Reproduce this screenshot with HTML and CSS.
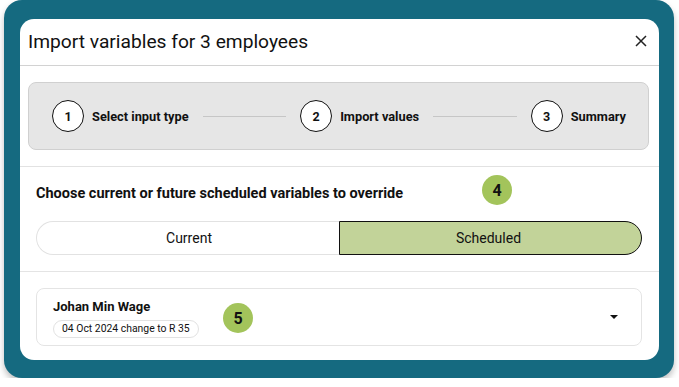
FILE: index.html
```html
<!DOCTYPE html>
<html lang='en'>
<head>
  <meta charset='UTF-8'>
  <meta name='viewport' content='width=device-width,initial-scale=1.0'>
  <title>Import variables</title>
  <link rel="stylesheet" href="styles.css">
</head>
<body>
  <div class='frame'>
    <div class='dialog'>
      <!-- HEADER -->
      <div class='header'>
        <h1>Import variables for 3 employees</h1>
        <button class='close' aria-label='Close'>
          <svg width='12' height='12' viewBox='0 0 12 12'><path d='M1 1L11 11M11 1L1 11' stroke='#222' stroke-width='1.5'/></svg>
        </button>
      </div>

      <!-- STEPPER -->
      <div class='section steps-wrap'>
        <div class='steps'>
          <div class='step'><span class='num'>1</span><span class='label'>Select input type</span></div>
          <span class='rule'></span>
          <div class='step'><span class='num'>2</span><span class='label'>Import values</span></div>
          <span class='rule'></span>
          <div class='step'><span class='num'>3</span><span class='label'>Summary</span></div>
        </div>
      </div>

      <!-- CHOICE -->
      <div class='section choice'>
        <p class='question'>Choose current or future scheduled variables to override</p>
        <span class='badge badge-4'>4</span>
        <div class='toggle'>
          <button class='opt'>Current</button>
          <button class='opt active'>Scheduled</button>
        </div>
      </div>

      <!-- EMPLOYEES -->
      <div class='section list'>
        <div class='emp'>
          <div class='emp-info'>
            <div class='emp-name'>Johan Min Wage</div>
            <span class='chip'>04 Oct 2024 change to R 35</span>
          </div>
          <span class='badge badge-5'>5</span>
          <span class='caret'></span>
        </div>
      </div>
    </div>
  </div>
</body>
</html>
```

FILE: styles.css
```css
*{box-sizing:border-box;font-family:Roboto,"Liberation Sans",Arial,sans-serif}
body{margin:0;background:#fff;color:#111}
.frame{width:670px;height:378px;margin-left:4px;padding:19px 15px 18px 16px;background:#156a80;border-radius:18px;box-shadow:0 4px 6px rgba(0,0,0,.25)}
.dialog{height:100%;background:#fff;border-radius:14px;overflow:hidden;display:flex;flex-direction:column}
.header{height:48px;display:flex;align-items:center;justify-content:space-between;padding:0 8px 2px 8px;border-bottom:1px solid #d2d2d2}
.header h1{margin:0;font-size:19.2px;font-weight:400;color:#111}
.close{border:none;background:none;padding:0;width:20px;height:20px;display:flex;align-items:center;justify-content:center;cursor:pointer}
.section{position:relative}
.steps-wrap{padding:16px 10px 16px 8px;border-bottom:1px solid #e2e2e2}
.steps{height:68px;display:flex;align-items:center;padding:0 22px 0 23px;background:#e6e6e6;border:1px solid #d0d0d0;border-radius:8px}
.step{display:flex;align-items:center;gap:8px}
.num{width:32px;height:32px;border:1px solid #111;border-radius:50%;background:#fff;display:flex;align-items:center;justify-content:center;font-size:12.5px;font-weight:700}
.label{font-size:12.8px;font-weight:700}
.rule{flex:1;height:1px;margin:0 14px;background:#c6c6c6}
.choice{padding:18px 17px 16px 16px;border-bottom:1px solid #e4e4e4}
.question{margin:0 0 19px;font-size:14.5px;font-weight:700}
.toggle{display:flex;height:34px}
.opt{flex:1;font-size:14px;color:#111;cursor:pointer;border:1px solid #e2e2e2;background:#fff}
.opt:first-child{border-radius:17px 0 0 17px;border-right:none;padding-left:8px}
.opt.active{background:#c2d399;border:1px solid #111;border-radius:0 17px 17px 0;flex:0 0 303px;padding-right:10px}
.badge{position:absolute;width:30px;height:30px;border-radius:50%;background:#a3c45b;display:flex;align-items:center;justify-content:center;font-size:16px;font-weight:700;color:#111}
.badge-4{left:462px;top:8px}
.list{padding:16px 17px 14px 16px}
.emp{position:relative;height:58px;display:flex;align-items:center;justify-content:space-between;padding:0 23px 0 16px;border:1px solid #e4e4e4;border-radius:8px}
.emp-info{display:flex;flex-direction:column;align-items:flex-start;gap:6px;padding-top:2px}
.emp-name{font-size:13px;font-weight:700}
.chip{font-size:10.4px;padding:2px 8px;border:1px solid #e2e2e2;border-radius:10px;line-height:12px}
.badge-5{left:186px;top:14px}
.caret{width:0;height:0;border-left:4px solid transparent;border-right:4px solid transparent;border-top:4px solid #111}
```
